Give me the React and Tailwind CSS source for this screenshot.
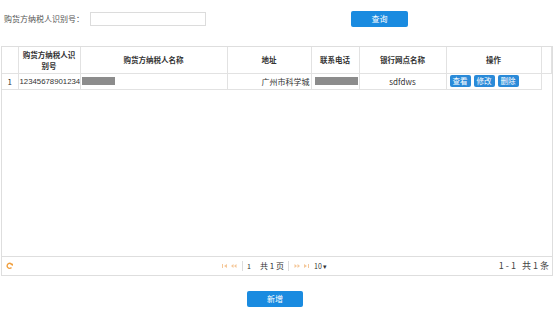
import React from "react";

const font = { fontFamily: '"Noto Sans CJK SC", "Liberation Sans", sans-serif' };

const cols = [
  { w: "w-[16px]", label: "" },
  { w: "w-[62px]", label: "购货方纳税人识别号" },
  { w: "w-[147px]", label: "购货方纳税人名称" },
  { w: "w-[84px]", label: "地址" },
  { w: "w-[48px]", label: "联系电话" },
  { w: "w-[87px]", label: "银行网点名称" },
  { w: "w-[95px]", label: "操作" },
  { w: "", label: "" },
];

const SmallBtn = ({ children }) => (
  <button className="h-[12px] px-[3px] rounded-[2px] bg-[#2a8ad8] text-white text-[7.5px] leading-[12px]">
    {children}
  </button>
);

const PagerIcon = ({ dir, end }) => (
  <svg width="8" height="6" viewBox="0 0 8 6" className={dir === "l" ? "" : "rotate-180"}>
    {end ? <rect x="1" y="1" width="1" height="4" fill="#f5c89a" /> : <path d="M1 3 L3.5 1 L3.5 5 Z" fill="#f5c89a" />}
    <path d={end ? "M3 3 L6 1 L6 5 Z" : "M4 3 L6.5 1 L6.5 5 Z"} fill="#f5c89a" />
  </svg>
);

const App = () => {
  return (
    <div className="w-[554px] h-[310px] bg-white text-[#333] overflow-hidden" style={font}>
      {/* search bar */}
      <div className="flex items-center h-[38px] pl-[4px]">
        <span className="text-[8px] text-[#555] w-[86px]">购货方纳税人识别号：</span>
        <input className="w-[116px] h-[14px] border border-[#dcdcdc] outline-none" />
        <button className="ml-[145px] w-[57px] h-[16px] rounded-[2px] bg-[#1a8be0] text-white text-[8px] leading-[16px]">
          查询
        </button>
      </div>

      {/* grid panel */}
      <div className="mx-[1px] mt-[8px] h-[230px] border border-[#dedede] flex flex-col">
        <div className="flex-1">
          <table className="w-full table-fixed border-collapse text-[8px]">
            <colgroup>
              {cols.map((c, i) => (
                <col key={i} className={c.w} />
              ))}
            </colgroup>
            <thead>
              <tr className="h-[26px]">
                {cols.map((c, i) => (
                  <th
                    key={i}
                    className={`border-r border-b border-[#e2e2e2] font-bold text-[7.5px] leading-[11px] text-[#333] px-[4px] ${i === 1 ? "break-all" : ""}`}
                  >
                    {c.label}
                  </th>
                ))}
              </tr>
            </thead>
            <tbody>
              <tr className="h-[16px] leading-[15px]">
                <td className="border-r border-b border-[#e2e2e2] text-center">1</td>
                <td className="border-r border-b border-[#e2e2e2] overflow-hidden whitespace-nowrap pl-[1px] font-['Liberation_Sans',sans-serif] text-[7.8px]">
                  12345678901234
                </td>
                <td className="border-r border-b border-[#e2e2e2] pl-[1px]">
                  <div className="w-[33px] h-[8px] bg-[#8c8c8c]" />
                </td>
                <td className="border-r border-b border-[#e2e2e2] text-right pr-[1px] whitespace-nowrap">
                  广州市科学城
                </td>
                <td className="border-r border-b border-[#e2e2e2] pl-[3px]">
                  <div className="w-[43px] h-[8px] bg-[#8c8c8c]" />
                </td>
                <td className="border-r border-b border-[#e2e2e2] text-center">sdfdws</td>
                <td className="border-r border-b border-[#e2e2e2] pl-[3px]">
                  <div className="flex gap-[3px]">
                    <SmallBtn>查看</SmallBtn>
                    <SmallBtn>修改</SmallBtn>
                    <SmallBtn>删除</SmallBtn>
                  </div>
                </td>
                <td />
              </tr>
            </tbody>
          </table>
        </div>

        {/* pager */}
        <div className="h-[19px] border-t border-[#dedede] flex items-center text-[8px]">
          <svg width="8" height="8" viewBox="0 0 8 8" className="ml-[4px]">
            <path d="M6 3 A2.5 2.5 0 1 0 5.5 5.5" stroke="#f0a040" strokeWidth="1.4" fill="none" />
            <path d="M4.5 2.5 L7 1.5 L7 4 Z" fill="#f0a040" />
          </svg>
          <div className="flex items-center ml-[207px] gap-[1px]">
            <PagerIcon dir="l" end />
            <PagerIcon dir="l" />
            <span className="w-px h-[10px] bg-[#ddd] mx-[3px]" />
            <span className="w-[10px] text-[7px]">1</span>
            <span className="ml-[2px]">共 1 页</span>
            <span className="w-px h-[10px] bg-[#ddd] mx-[3px]" />
            <PagerIcon dir="r" />
            <PagerIcon dir="r" end />
            <span className="ml-[3px] text-[7px]">10 ▾</span>
          </div>
          <span className="ml-auto mr-[3px] text-[9px] text-[#444]">1 - 1&nbsp;&nbsp;&nbsp;共 1 条</span>
        </div>
      </div>

      <div className="flex justify-center pt-[15px] pr-[4px]">
        <button className="w-[56px] h-[16px] rounded-[2px] bg-[#1a8be0] text-white text-[8px] leading-[16px]">
          新增
        </button>
      </div>
    </div>
  );
};

export default App;
